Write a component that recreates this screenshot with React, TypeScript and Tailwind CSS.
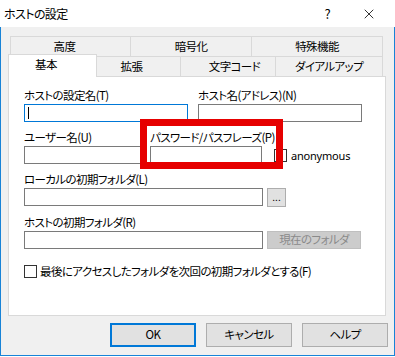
import { X } from 'lucide-react'

const FONT = { fontFamily: '"Noto Sans CJK JP", "Noto Sans", sans-serif' }

const row1 = [
  { label: '高度', w: 'w-[120px]', pad: 'pr-[12px]' },
  { label: '暗号化', w: 'w-[121px]', pad: '' },
  { label: '特殊機能', w: 'w-[132px]', pad: '' },
]

const row2 = [
  { label: '拡張', w: 'w-[83px]', pad: 'pr-[14px]' },
  { label: '文字コード', w: 'w-[95px]', pad: 'pl-[13px]' },
  { label: 'ダイアルアップ', w: 'w-[108px]', pad: '' },
]

function Label({ children }: { children: React.ReactNode }) {
  return <div className="h-[16px] leading-[16px] text-[11.5px] text-black whitespace-nowrap">{children}</div>
}

function Input({ w, focused }: { w: string; focused?: boolean }) {
  return (
    <div
      className={`${w} h-[18px] mt-[1px] bg-white border relative ${focused ? 'border-[#0078d7]' : 'border-[#7a7a7a]'}`}
    >
      {focused && <span className="absolute left-[3px] top-[2px] w-px h-[12px] bg-black" />}
    </div>
  )
}

function Check() {
  return <span className="w-[13px] h-[13px] border border-[#333] bg-white shrink-0" />
}

function Btn({ children, def }: { children: React.ReactNode; def?: boolean }) {
  return (
    <div
      className={`w-[86px] h-[24px] flex items-center justify-center text-[11.5px] bg-[#e1e1e1] ${
        def ? 'border-2 border-[#0078d7]' : 'border border-[#adadad]'
      }`}
    >
      {children}
    </div>
  )
}

export default function App() {
  return (
    <div className="w-[395px] h-[357px] bg-white text-black [font-feature-settings:'palt'] tracking-[-0.6px]" style={FONT}>
      {/* title bar */}
      <div className="h-[27px] flex items-center pl-[4px] pr-[18px] text-[12px]">
        <span className="flex-1">ホストの設定</span>
        <span className="mr-[31px] text-[13px]">?</span>
        <X size={16} strokeWidth={1.2} />
      </div>

      {/* body */}
      <div className="h-[329px] bg-[#f0f0f0] border-x border-b border-[#1883d7] pt-[9px] px-[7px]">
        {/* tabs */}
        <div className="flex ml-[2px] h-[20px]">
          {row1.map((t, i) => (
            <div
              key={t.label}
              className={`${t.w} ${t.pad} h-[20px] flex items-center justify-center text-[11.5px] border-t border-l border-[#d9d9d9] ${
                i === row1.length - 1 ? 'border-r' : ''
              }`}
            >
              {t.label}
            </div>
          ))}
        </div>
        <div className="flex items-end h-[20px]">
          <div className="w-[89px] h-[23px] -mb-px relative z-10 bg-white border-x border-t border-[#d9d9d9] flex items-start justify-center pt-[1px] pr-[13px] text-[11.5px]">
            基本
          </div>
          {row2.map((t, i) => (
            <div
              key={t.label}
              className={`${t.w} ${t.pad} h-[20px] flex items-center justify-center text-[11.5px] border-t border-[#d9d9d9] ${
                i > 0 ? 'border-l' : ''
              } ${i === row2.length - 1 ? 'border-r' : ''}`}
            >
              {t.label}
            </div>
          ))}
        </div>

        {/* panel */}
        <div className="w-[378px] h-[240px] bg-white border border-[#d9d9d9] relative pt-[10px] pl-[15px]">
          <div className="flex gap-[10px]">
            <div>
              <Label>ホストの設定名(T)</Label>
              <Input w="w-[164px]" focused />
            </div>
            <div>
              <Label>ホスト名(アドレス)(N)</Label>
              <Input w="w-[164px]" />
            </div>
          </div>

          <div className="flex mt-[7px] items-end">
            <div className="w-[126px]">
              <Label>ユーザー名(U)</Label>
              <Input w="w-[120px]" />
            </div>
            <div className="w-[112px]">
              <Label>パスワード/パスフレーズ(P)</Label>
              <Input w="w-[112px]" />
            </div>
            <div className="flex items-center h-[18px] ml-[12px] gap-[4px]">
              <Check />
              <span className="leading-none text-[11px] tracking-[-0.2px]" style={{ fontFamily: '"Noto Sans", sans-serif' }}>
                anonymous
              </span>
            </div>
          </div>

          <div className="mt-[7px]">
            <Label>ローカルの初期フォルダ(L)</Label>
            <div className="flex items-start gap-[4px]">
              <Input w="w-[239px]" />
              <div className="w-[19px] h-[19px] mt-[1px] bg-[#e1e1e1] border border-[#adadad] flex items-center justify-center text-[10px] leading-none pb-[2px] tracking-normal">
                ...
              </div>
            </div>
          </div>

          <div className="mt-[7px]">
            <Label>ホストの初期フォルダ(R)</Label>
            <div className="flex items-start gap-[4px]">
              <Input w="w-[239px]" />
              <div className="w-[94px] h-[18px] mt-[1px] bg-[#cccccc] border border-[#bfbfbf] flex items-center justify-center text-[11.5px] text-[#8a8a8a]">
                現在のフォルダ
              </div>
            </div>
          </div>

          <div className="flex items-center gap-[3px] mt-[16px] h-[13px] text-[11.5px]">
            <Check />
            <span className="whitespace-nowrap">最後にアクセスしたフォルダを次回の初期フォルダとする(F)</span>
          </div>

          {/* highlight annotation */}
          <div className="absolute left-[131px] top-[42px] w-[143px] h-[50px] border-[7px] border-[#e60000] pointer-events-none" />
        </div>

        {/* buttons */}
        <div className="flex justify-end gap-[10px] mt-[7px] -mr-px">
          <Btn def>OK</Btn>
          <Btn>キャンセル</Btn>
          <Btn>ヘルプ</Btn>
        </div>
      </div>
    </div>
  )
}
